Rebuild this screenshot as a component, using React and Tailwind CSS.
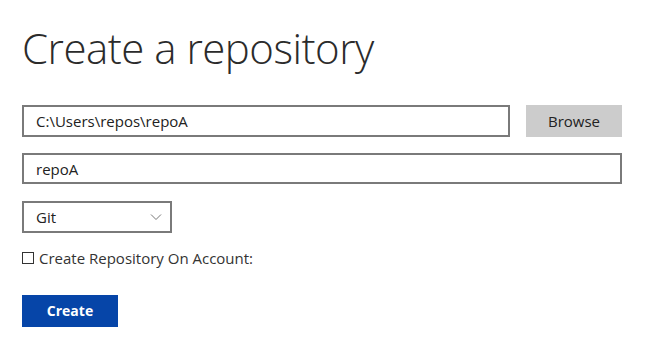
import React from "react";

export default function App() {
  return (
    <div className="w-[656px] h-[361px] bg-white px-[22px] pt-[22px] text-[#333] font-['Open_Sans',sans-serif]">
      <h1 className="text-[42px] leading-[52px] font-light tracking-[-0.5px] text-[#2b2b2b]">Create a repository</h1>

      {/* Path + browse */}
      <div className="mt-[31px] flex items-center gap-4">
        <input
          defaultValue="C:\Users\repos\repoA"
          className="w-[488px] h-[32px] border-2 border-[#7a7a7a] px-3 text-[15px] text-[#222] outline-none"
        />
        <button className="w-[96px] h-[32px] bg-[#cccccc] text-[15px] text-[#222]">Browse</button>
      </div>

      {/* Name */}
      <input
        defaultValue="repoA"
        className="mt-[16px] block w-[600px] h-[31px] border-2 border-[#7a7a7a] px-3 text-[15px] text-[#222] outline-none"
      />

      {/* Type */}
      <div className="mt-[17px] relative w-[150px] h-[32px] border-2 border-[#7a7a7a] flex items-center px-3 text-[15px] text-[#222]">
        Git
        <svg className="absolute right-[8px] top-1/2 -translate-y-1/2 w-[12px] h-[8px]" viewBox="0 0 12 8" fill="none">
          <path d="M1 1.5l5 5 5-5" stroke="#777" strokeWidth="1" />
        </svg>
      </div>

      {/* Checkbox */}
      <label className="mt-[14px] flex items-center gap-[5px] text-[15px] text-[#333]">
        <span className="w-[12px] h-[12px] border border-[#333] bg-white" />
        Create Repository On Account:
      </label>

      <button className="mt-[25px] w-[96px] h-[32px] bg-[#0645a8] text-white text-[14px] font-bold">Create</button>
    </div>
  );
}
